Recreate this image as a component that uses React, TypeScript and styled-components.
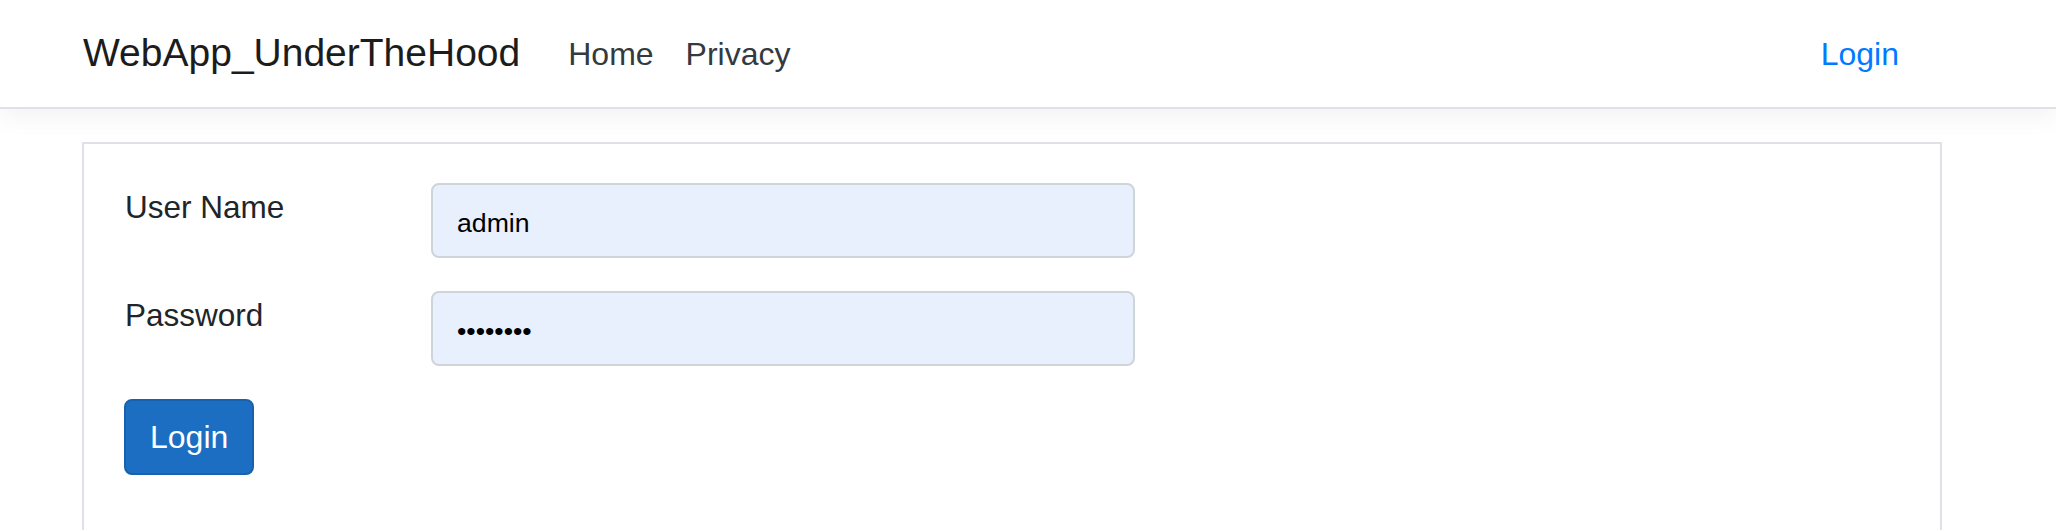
import React from "react";
import styled, { createGlobalStyle } from "styled-components";

const GlobalStyle = createGlobalStyle`
  body {
    margin: 0;
    background: #ffffff;
    font-family: "Liberation Sans", Arial, sans-serif;
    color: #212529;
  }
`;

const Header = styled.header`
  display: flex;
  align-items: center;
  height: 107px;
  padding: 0 141px 0 83px;
  background: #ffffff;
  border-bottom: 2px solid #dee2e6;
  box-shadow: 0 8px 24px rgba(0, 0, 0, 0.05);
  line-height: 1.5;
`;

const Brand = styled.a`
  font-size: 39px;
  color: #1c1c1c;
  text-decoration: none;
  margin-right: 32px;
`;

const NavList = styled.nav`
  display: flex;
`;

const NavLink = styled.a`
  font-size: 32px;
  padding: 0 16px;
  color: #343a40;
  text-decoration: none;
`;

const AuthLink = styled.a`
  margin-left: auto;
  font-size: 32px;
  padding: 0 16px;
  color: #007bff;
  text-decoration: none;
`;

const Main = styled.main`
  padding: 33px 114px 0 82px;
`;

const Card = styled.section`
  min-height: 500px;
  padding: 39px 41px;
  border: 2px solid #dee2e6;
`;

const Form = styled.form`
  display: grid;
  grid-template-columns: 306px 704px;
  row-gap: 33px;
  align-items: start;
`;

const FieldLabel = styled.label`
  font-size: 31.5px;
  line-height: 48px;
  color: #212529;
`;

const TextInput = styled.input`
  box-sizing: border-box;
  width: 704px;
  height: 75px;
  padding: 6px 24px 0;
  border: 2px solid #ced4da;
  border-radius: 8px;
  background: #e8f0fe;
  font-family: "Liberation Sans", Arial, sans-serif;
  font-size: 26.67px;
  color: #000000;
  outline: none;
`;

const SubmitButton = styled.button`
  grid-column: 1 / span 2;
  justify-self: start;
  box-sizing: border-box;
  height: 76px;
  margin-left: -1px;
  padding: 0 24px;
  border: 2px solid #1861ac;
  border-radius: 8px;
  background: #1b6ec2;
  color: #ffffff;
  font-family: "Liberation Sans", Arial, sans-serif;
  font-size: 32px;
  cursor: pointer;
`;

const App: React.FC = () => {
  return (
    <>
      <GlobalStyle />
      <Header>
        <Brand href="#">WebApp_UnderTheHood</Brand>
        <NavList>
          <NavLink href="#">Home</NavLink>
          <NavLink href="#">Privacy</NavLink>
        </NavList>
        <AuthLink href="#">Login</AuthLink>
      </Header>
      <Main>
        <Card>
          <Form onSubmit={(e) => e.preventDefault()}>
            <FieldLabel htmlFor="username">User Name</FieldLabel>
            <TextInput id="username" type="text" defaultValue="admin" readOnly />
            <FieldLabel htmlFor="password">Password</FieldLabel>
            <TextInput id="password" type="password" defaultValue="password" readOnly />
            <SubmitButton type="submit">Login</SubmitButton>
          </Form>
        </Card>
      </Main>
    </>
  );
};

export default App;
